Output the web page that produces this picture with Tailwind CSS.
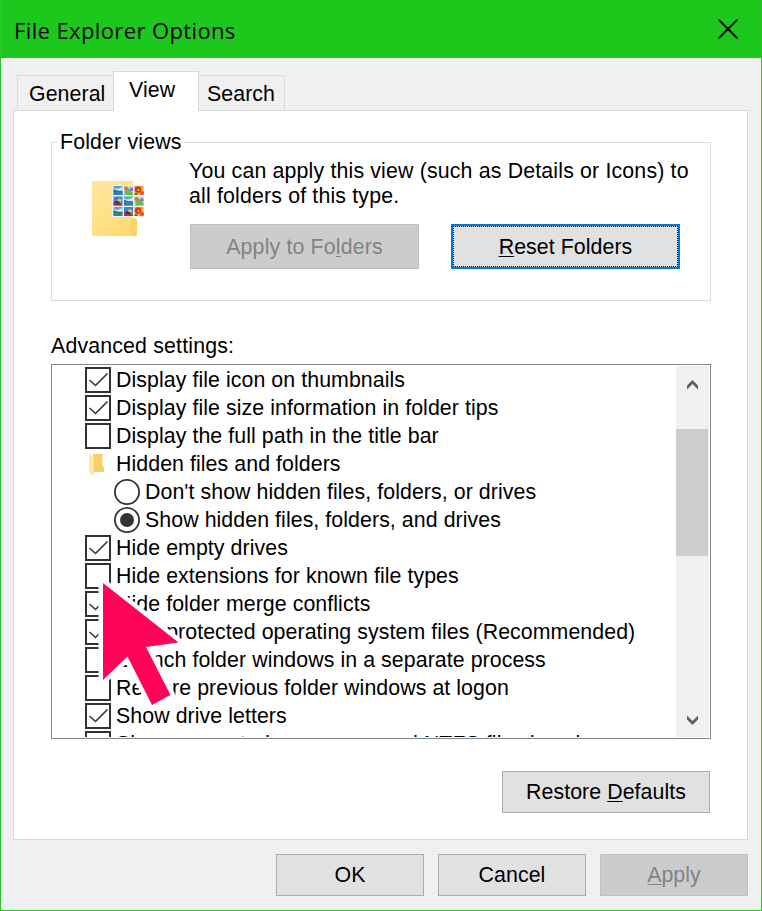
<!DOCTYPE html>
<html lang="en">
<head>
<meta charset="utf-8">
<title>File Explorer Options</title>
<script src="https://cdn.jsdelivr.net/npm/@tailwindcss/browser@4"></script>
</head>
<body class="w-[762px] h-[911px] overflow-hidden bg-[#f0f0f0] text-black font-['Liberation_Sans',Arial,sans-serif] text-[21.33px] leading-[28px] tracking-[0.07px] whitespace-nowrap">
<svg class="hidden">
  <defs>
    <g id="check"><rect x="1" y="1" width="24" height="24" fill="#fff" stroke="#333" stroke-width="2"/><path d="M4.500 13 10.500 18.500 22.500 6.500" fill="none" stroke="#333" stroke-width="1.6"/></g>
    <g id="box"><rect x="1" y="1" width="24" height="24" fill="#fff" stroke="#333" stroke-width="2"/></g>
    <g id="lake"><rect width="9" height="9" fill="#5a9fd8"/><path d="M0 2 4 3 9 1V4.500H0Z" fill="#d4eef8"/><path d="M0 3 5 5H9V6H0Z" fill="#35775c"/><path d="M0 6H9V9H0Z" fill="#337da6"/></g>
    <g id="hill"><rect width="9" height="9" fill="#a9daf0"/><path d="M1 9V5L4 2 9 7V9Z" fill="#71b83c"/><circle cx="2" cy="2.500" r="2" fill="#ee6b25"/><path d="M6 2H9V5H6Z" fill="#7772cf"/></g>
    <g id="flower"><rect width="9" height="9" fill="#efad3d"/><circle cx="3.500" cy="3.500" r="3.300" fill="#d93620"/><circle cx="7.500" cy="7" r="2" fill="#e65112"/><circle cx="4" cy="4" r="1" fill="#f9c432"/><path d="M0 7H3V9H0Z" fill="#567d24"/></g>
    <g id="fish"><rect width="9" height="9" fill="#3486d4"/><path d="M0 5 5 4 9 9H0Z" fill="#b52c34"/><circle cx="6" cy="4" r="2" fill="#f0bd2c"/><path d="M2 5H6V7H2Z" fill="#252c72"/></g>
  </defs>
</svg>
<div class="w-[762px] h-[911px] flex flex-col border-x border-b border-[#2bc52e]">
  <header class="h-[58px] shrink-0 bg-[#1dc81d] flex items-center justify-between pl-[13px] pr-[22px]">
    <h1 class="font-['Open_Sans','Noto_Sans',sans-serif] text-[22px] tracking-[0.38px] pt-[2px]">File Explorer Options</h1>
    <svg class="w-[22px] h-[22px]" viewBox="0 0 22 22"><path d="M1.500 1.500 20.500 20.500M20.500 1.500 1.500 20.500" stroke="#000" stroke-width="1.8"/></svg>
  </header>
  <nav class="h-[53px] shrink-0 flex items-end pl-[16px] relative z-10">
    <div class="w-[97px] h-[36px] border border-b-0 border-[#d9d9d9] pl-[11px] pt-[4px]">General</div>
    <div class="w-[86px] h-[40px] border border-b-0 border-[#d9d9d9] bg-white -ml-px pl-[15px] pt-[4px]">View</div>
    <div class="w-[87px] h-[36px] border border-b-0 border-[#d9d9d9] -ml-px pl-[8px] pt-[4px]">Search</div>
  </nav>
  <main class="-mt-px ml-[12px] w-[735px] h-[730px] shrink-0 border border-[#d9d9d9] bg-white px-[37px] flex flex-col">
    <fieldset class="mt-[17px] h-[173px] w-[660px] border border-[#dcdcdc] shrink-0 px-0">
      <legend class="ml-[5px] pl-[3px] pr-[2px] leading-[29px] tracking-[0.15px]">Folder views</legend>
      <div class="flex">
        <svg class="w-[56px] h-[60px] ml-[38px] mt-[23px] shrink-0" viewBox="0 0 56 60">
          <defs><linearGradient id="fold" x1="0" y1="0" x2="1" y2="1"><stop stop-color="#ffe8a0"/><stop offset="1" stop-color="#fed76c"/></linearGradient></defs>
          <path d="M2 1H43V38L47 39V56H2Z" fill="url(#fold)"/><path d="M41 38H43L47 39V56H41Z" fill="#f9cd5c" opacity=".5"/>
          <path d="M22 5H54V37H22Z" fill="#f1f1f4"/>
          <use href="#lake" x="23.500" y="6"/><use href="#hill" x="34" y="6"/><use href="#flower" x="44.500" y="6"/>
          <use href="#fish" x="23.500" y="16.500"/><use href="#lake" x="34" y="16.500"/><use href="#hill" x="44.500" y="16.500"/>
          <use href="#lake" x="23.500" y="27"/><use href="#fish" x="34" y="27"/><use href="#flower" x="44.500" y="27"/>
        </svg>
        <div class="ml-[43px]">
          <p class="leading-[25px] pt-[2px] tracking-[0.16px]">You can apply this view (such as Details or Icons) to<br>all folders of this type.</p>
          <div class="flex mt-[15px] ml-[1px] gap-[32px]">
            <button class="w-[229px] h-[45px] bg-[#ccc] border border-[#bfbfbf] text-[#838383] tracking-[0.15px]">Apply to Fo<span class="underline decoration-1 underline-offset-2">l</span>ders</button>
            <button class="w-[229px] h-[45px] bg-[#e1e1e1] border-2 border-[#0078d7] p-0"><span class="flex h-[41px] items-center justify-center border border-dotted border-black"><span><span class="underline decoration-1 underline-offset-2">R</span>eset Folders</span></span></button>
          </div>
        </div>
      </div>
    </fieldset>
    <p class="mt-[31px] tracking-[0.16px]">Advanced settings:</p>
    <div class="mt-[4px] w-[660px] h-[375px] shrink-0 border border-[#828790] flex p-px">
      <div class="w-[623px] h-[371px] overflow-hidden pl-[32px]">
        <div class="h-[28px] flex items-center gap-[5px]"><svg class="size-[26px]"><use href="#check"/></svg>Display file icon on thumbnails</div>
        <div class="h-[28px] flex items-center gap-[5px]"><svg class="size-[26px]"><use href="#check"/></svg>Display file size information in folder tips</div>
        <div class="h-[28px] flex items-center gap-[5px]"><svg class="size-[26px]"><use href="#box"/></svg>Display the full path in the title bar</div>
        <div class="h-[28px] flex items-center gap-[5px]"><svg class="size-[26px]" viewBox="0 0 26 26"><path d="M8 3H17.500V15L19 16V21H8Z" fill="#f5d06b"/><path d="M4 3 9 5V24.500L4 22Z" fill="#ffe8a5"/></svg>Hidden files and folders</div>
        <div class="h-[28px] flex items-center gap-[5px] pl-[29px]"><svg class="size-[26px]" viewBox="0 0 26 26"><circle cx="13" cy="13" r="12.100" fill="#fff" stroke="#333" stroke-width="1.8"/></svg>Don't show hidden files, folders, or drives</div>
        <div class="h-[28px] flex items-center gap-[5px] pl-[29px]"><svg class="size-[26px]" viewBox="0 0 26 26"><circle cx="13" cy="13" r="12.100" fill="#fff" stroke="#333" stroke-width="1.8"/><circle cx="13" cy="13" r="7" fill="#333"/></svg>Show hidden files, folders, and drives</div>
        <div class="h-[28px] flex items-center gap-[5px]"><svg class="size-[26px]"><use href="#check"/></svg>Hide empty drives</div>
        <div class="h-[28px] flex items-center gap-[5px]"><svg class="size-[26px]"><use href="#box"/></svg>Hide extensions for known file types</div>
        <div class="h-[28px] flex items-center gap-[5px]"><svg class="size-[26px]"><use href="#check"/></svg>Hide folder merge conflicts</div>
        <div class="h-[28px] flex items-center gap-[5px]"><svg class="size-[26px]"><use href="#check"/></svg>Hide protected operating system files (Recommended)</div>
        <div class="h-[28px] flex items-center gap-[5px]"><svg class="size-[26px]"><use href="#box"/></svg>Launch folder windows in a separate process</div>
        <div class="h-[28px] flex items-center gap-[5px]"><svg class="size-[26px]"><use href="#box"/></svg>Restore previous folder windows at logon</div>
        <div class="h-[28px] flex items-center gap-[5px]"><svg class="size-[26px]"><use href="#check"/></svg>Show drive letters</div>
        <div class="h-[28px] flex items-center gap-[5px]"><svg class="size-[26px]"><use href="#box"/></svg>Show encrypted or compressed NTFS files in color</div>
      </div>
      <div class="w-[33px] h-[371px] bg-[#f0f0f0] flex flex-col">
        <svg class="w-[33px] h-[63px]" viewBox="0 0 33 63"><path d="M11 19.500 16.500 14 22 19.500V23.500L16.500 18 11 23.500Z" fill="#606060"/></svg>
        <div class="w-[32px] h-[127px] bg-[#cdcdcd]"></div>
        <svg class="w-[33px] h-[33px] mt-auto" viewBox="0 0 33 33"><path d="M11 11.500 16.500 17 22 11.500V15.500L16.500 21 11 15.500Z" fill="#606060"/></svg>
      </div>
    </div>
    <button class="self-end mt-[32px] w-[208px] h-[42px] shrink-0 border border-[#adadad] bg-[#e1e1e1]">Restore <span class="underline decoration-1 underline-offset-2">D</span>efaults</button>
  </main>
  <footer class="flex justify-end gap-[14px] pt-[14px] pr-[13px]">
    <button class="w-[148px] h-[42px] border border-[#adadad] bg-[#e1e1e1]">OK</button>
    <button class="w-[148px] h-[42px] border border-[#adadad] bg-[#e1e1e1]">Cancel</button>
    <button class="w-[148px] h-[42px] border border-[#bfbfbf] bg-[#ccc] text-[#838383]"><span class="underline decoration-1 underline-offset-2">A</span>pply</button>
  </footer>
</div>
<svg class="absolute left-[90px] top-[565px] w-[110px] h-[150px] z-20" viewBox="90 565 110 150"><path d="M103 583 178.500 642.500 146 647 170.500 695 152 705 127.500 656.500 103 680Z" fill="#ff0558" stroke="#fff" stroke-width="9" paint-order="stroke"/></svg>
</body>
</html>
